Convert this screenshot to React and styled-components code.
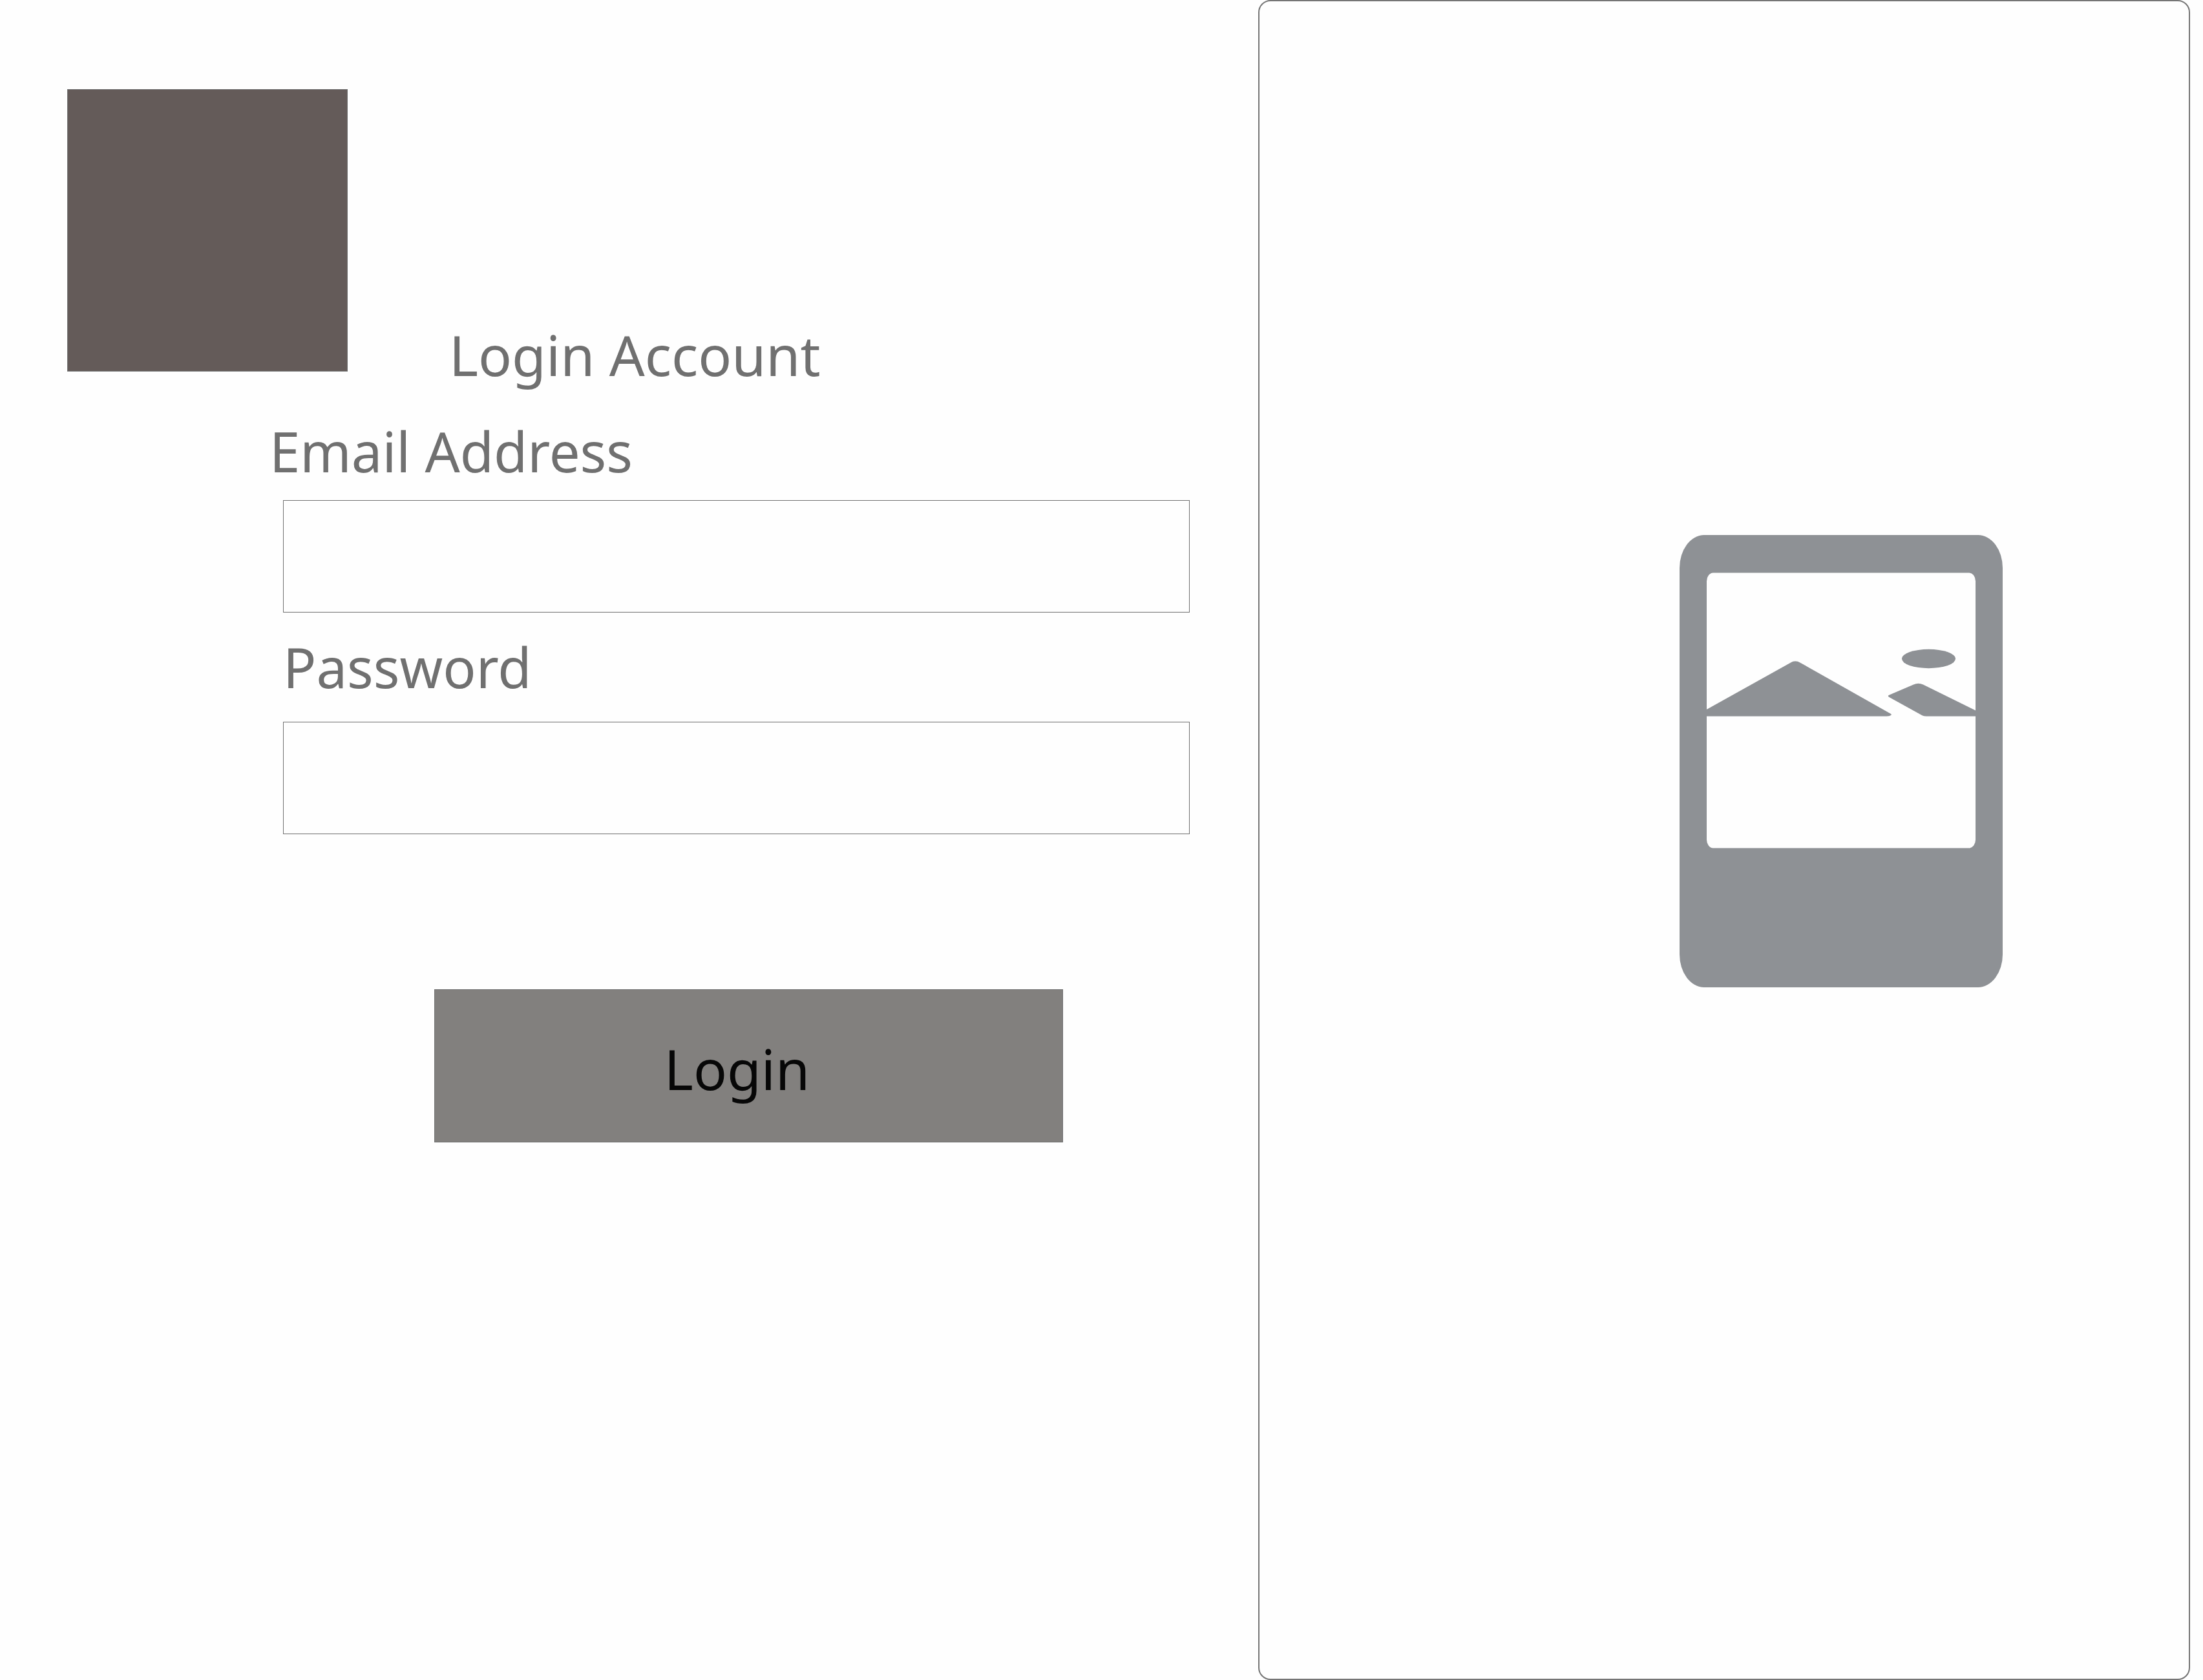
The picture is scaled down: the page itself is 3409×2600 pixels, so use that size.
import React from "react";
import styled, { createGlobalStyle } from "styled-components";

const GlobalStyle = createGlobalStyle`
  *, *::before, *::after { box-sizing: border-box; }
  body {
    margin: 0;
    background: #fefefe;
    color: #707070;
    font-family: "Segoe UI", "Noto Sans", "Open Sans", sans-serif;
    font-size: 86px;
    line-height: 120px;
  }
`;

const Page = styled.main`
  display: grid;
  grid-template-columns: minmax(0, 1947fr) minmax(0, 1442fr);
  min-height: 100vh;
  padding-right: 20px;
`;

const LoginColumn = styled.section`
  padding: 138px 106px 0 104px;
`;

const Header = styled.header`
  display: flex;
  align-items: flex-end;
  gap: 157px;
  min-height: 471px;
`;

const Logo = styled.div`
  align-self: flex-start;
  flex: none;
  width: 434px;
  height: 437px;
  background: #645b59;
  border: 1px solid #707070;
`;

const Title = styled.h1`
  margin: 0;
  font: inherit;
  white-space: nowrap;
`;

const Form = styled.form`
  display: flex;
  flex-direction: column;
  gap: 24px;
  padding: 29px 0 0 312px;
`;

const Field = styled.div`
  display: flex;
  flex-direction: column;
  gap: ${(p) => p.$gap}px;
  padding-left: 22px;
`;

const Label = styled.label`
  margin-left: ${(p) => (p.$outdent ? "-21px" : "0")};
  font-size: 85px;
`;

const Input = styled.input`
  width: 100%;
  height: 174px;
  padding: 0 32px;
  font: inherit;
  color: inherit;
  background: #fefefe;
  border: 1px solid #707070;
  border-radius: 0;
`;

const Actions = styled.div`
  display: flex;
  padding: 216px 196px 0 256px;
`;

const LoginButton = styled.button`
  flex: 1;
  height: 237px;
  padding: 8px 36px 0 0;
  font: inherit;
  color: #070707;
  background: #82807e;
  border: 1px solid #707070;
  border-radius: 0;
`;

const PicturePanel = styled.aside`
  display: flex;
  justify-content: flex-end;
  align-items: flex-start;
  padding: 825px 288px 0 0;
  border: 2px solid #757575;
  border-radius: 19px;
`;

const Picture = styled.svg`
  width: 500px;
  height: 702px;
  fill: #8e9195;
`;

export default function App() {
  return (
    <>
      <GlobalStyle />
      <Page>
        <LoginColumn>
          <Header>
            <Logo />
            <Title>Login Account</Title>
          </Header>
          <Form onSubmit={(e) => e.preventDefault()}>
            <Field $gap={16}>
              <Label htmlFor="email" $outdent>Email Address</Label>
              <Input id="email" type="email" />
            </Field>
            <Field $gap={25}>
              <Label htmlFor="password">Password</Label>
              <Input id="password" type="password" />
            </Field>
            <Actions>
              <LoginButton type="submit">Login</LoginButton>
            </Actions>
          </Form>
        </LoginColumn>
        <PicturePanel>
          <Picture viewBox="0 0 500 702" aria-hidden="true">
            <path
              fillRule="evenodd"
              d="M38 1H462A38 51 0 0 1 500 52V650A38 51 0 0 1 462 701H38A38 51 0 0 1 0 650V52A38 51 0 0 1 38 1Z
                 M52 59.5A10 13 0 0 0 42 72.5V472A10 13 0 0 0 52 485.500H448A10 13 0 0 0 458 472V72.5A10 13 0 0 0 448 59.500Z"
            />
            <path d="M41 271.500L171.500 198.700Q179 194 187 198.700L326.500 277.500C330 279 326 281.500 321 281.500H41Z" />
            <path d="M324 248.700L362 232.500Q369.500 229 377 232.500L459 273V281.500H382Q378.500 281.500 376 280.500L324 251.700Q321.500 250 324 248.700Z" />
            <ellipse cx="385.500" cy="192.500" rx="41.500" ry="14.700" />
          </Picture>
        </PicturePanel>
      </Page>
    </>
  );
}
